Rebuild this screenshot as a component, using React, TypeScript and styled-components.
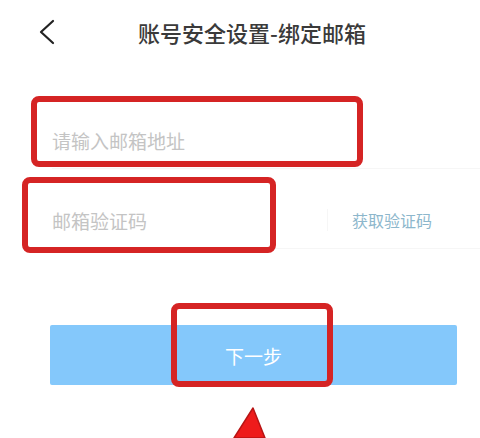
import React from 'react'
import styled, { createGlobalStyle } from 'styled-components'

const GlobalStyle = createGlobalStyle`
  html, body {
    margin: 0;
    padding: 0;
    background: #fff;
  }
  body {
    font-family: "Noto Sans CJK SC", "Noto Sans", sans-serif;
  }
`

const Screen = styled.div`
  position: relative;
  width: 480px;
  height: 438px;
  overflow: hidden;
  background: #fff;
`

const Header = styled.header`
  display: grid;
  grid-template-columns: 24px 1fr 24px;
  align-items: center;
  height: 64px;
  padding: 0 14px 0 38px;
`

const BackButton = styled.button`
  display: flex;
  align-items: center;
  padding: 0;
  border: 0;
  background: none;
`

const Title = styled.h1`
  margin: 0;
  text-align: center;
  font-size: 22px;
  font-weight: 500;
  color: #3a3a3a;
`

const Form = styled.form`
  display: flex;
  flex-direction: column;
  gap: 23px;
  padding: 48px 0 0 52px;
`

const Row = styled.div`
  display: flex;
  align-items: center;
  height: 56px;
  border-bottom: 1px solid #f6f6f6;
`

const Field = styled.input`
  flex: 1;
  min-width: 0;
  border: 0;
  outline: none;
  background: none;
  padding: 0;
  font-family: inherit;
  font-size: 19px;
  color: #333;

  &::placeholder {
    color: #c4c4c4;
  }
`

const CodeLink = styled.span`
  display: flex;
  align-items: center;
  height: 22px;
  padding: 0 48px 0 24px;
  border-left: 1px solid #f6f6f6;
  font-size: 16px;
  color: #8db7cc;
`

const SubmitButton = styled.button`
  display: flex;
  align-items: center;
  justify-content: center;
  width: 407px;
  height: 60px;
  margin: 76px 0 0 50px;
  border: 0;
  border-radius: 2px;
  background: #84c8fb;
  font-family: inherit;
  font-size: 19px;
  color: #fff;
`

const Highlight = styled.div<{ $x: number; $y: number; $w: number; $h: number }>`
  position: absolute;
  left: ${p => p.$x}px;
  top: ${p => p.$y}px;
  width: ${p => p.$w}px;
  height: ${p => p.$h}px;
  box-sizing: border-box;
  border: 6px solid #d52424;
  border-radius: 8px;
  pointer-events: none;
`

const Pointer = styled.svg`
  position: absolute;
  left: 226px;
  top: 405px;
`

const App = () => {
  return (
    <Screen>
      <GlobalStyle />
      <Header>
        <BackButton type="button" aria-label="返回">
          <svg width="18" height="28" viewBox="0 0 18 28">
            <polyline
              points="15,3 3,14 15,25"
              fill="none"
              stroke="#222"
              strokeWidth="2.2"
              strokeLinecap="round"
              strokeLinejoin="round"
            />
          </svg>
        </BackButton>
        <Title>账号安全设置-绑定邮箱</Title>
        <span />
      </Header>
      <Form>
        <Row>
          <Field placeholder="请输入邮箱地址" />
        </Row>
        <Row>
          <Field placeholder="邮箱验证码" />
          <CodeLink>获取验证码</CodeLink>
        </Row>
      </Form>
      <SubmitButton type="button">下一步</SubmitButton>

      <Highlight $x={31} $y={96} $w={332} $h={71} />
      <Highlight $x={22} $y={177} $w={254} $h={76} />
      <Highlight $x={171} $y={303} $w={162} $h={84} />
      <Pointer width="50" height="33" viewBox="0 0 50 33">
        <polygon points="27,3 8,33 39,33" fill="#ee1b1b" stroke="#b81414" strokeWidth="1.5" strokeLinejoin="round" />
      </Pointer>
    </Screen>
  )
}

export default App
